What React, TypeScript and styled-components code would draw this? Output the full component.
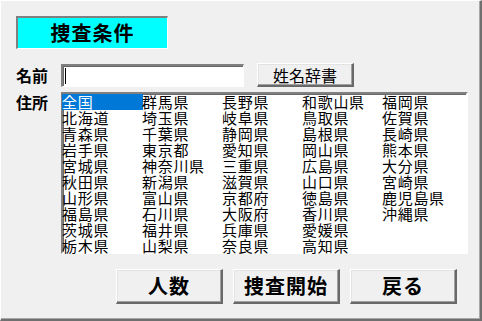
import * as React from 'react';
import styled, { createGlobalStyle } from 'styled-components';

const GlobalStyle = createGlobalStyle`
	html, body {
		margin: 0;
		padding: 0;
		background: #f0f0f0;
	}
	* {
		box-sizing: border-box;
	}
`;

const jpFont = `"Noto Sans CJK JP", "MS Gothic", sans-serif`;

const prefectures = [
	'全国', '北海道', '青森県', '岩手県', '宮城県', '秋田県', '山形県', '福島県', '茨城県', '栃木県',
	'群馬県', '埼玉県', '千葉県', '東京都', '神奈川県', '新潟県', '富山県', '石川県', '福井県', '山梨県',
	'長野県', '岐阜県', '静岡県', '愛知県', '三重県', '滋賀県', '京都府', '大阪府', '兵庫県', '奈良県',
	'和歌山県', '鳥取県', '島根県', '岡山県', '広島県', '山口県', '徳島県', '香川県', '愛媛県', '高知県',
	'福岡県', '佐賀県', '長崎県', '熊本県', '大分県', '宮崎県', '鹿児島県', '沖縄県',
];

const Window = styled.div`
	width: 482px;
	height: 321px;
	background: #f0f0f0;
	border-style: solid;
	border-width: 1px 2px 2px 1px;
	border-color: #fff #6f6f6f #6f6f6f #fff;
	box-shadow: inset -1px -1px 0 #a8a8a8;
	padding: 15px 0 0 15px;
	font-family: ${jpFont};
	color: #000;
	display: flex;
	flex-direction: column;
`;

const TitleBox = styled.div`
	width: 152px;
	height: 33px;
	background: #00ffff;
	border-style: solid;
	border-width: 2px 1px 1px 2px;
	border-color: #808080 #fff #fff #808080;
	display: flex;
	align-items: center;
	justify-content: center;
	font-size: 20px;
	font-weight: bold;
	line-height: 1;
	letter-spacing: 1px;
	padding-bottom: 1px;
`;

const FormRow = styled.div<{ $align: 'center' | 'flex-start'; $top: number }>`
	display: flex;
	align-items: ${(p) => p.$align};
	margin-top: ${(p) => p.$top}px;
`;

const Label = styled.div<{ $pad?: number }>`
	width: 45px;
	font-size: 16px;
	font-weight: bold;
	line-height: 16px;
	padding-top: ${(p) => p.$pad ?? 0}px;
`;

const TextBox = styled.div`
	width: 183px;
	height: 23px;
	background: #fff;
	border-style: solid;
	border-width: 2px 1px 1px 2px;
	border-color: #808080 #fff #fff #808080;
	box-shadow: inset 1px 1px 0 #696969;
	display: flex;
	align-items: center;
	padding-left: 2px;
`;

const Caret = styled.span`
	display: block;
	width: 1px;
	height: 16px;
	background: #000;
`;

const Button = styled.button<{ $w: number; $h: number; $big?: boolean }>`
	width: ${(p) => p.$w}px;
	height: ${(p) => p.$h}px;
	margin: 0;
	padding: 0;
	background: #f0f0f0;
	border-style: solid;
	border-width: 1px 2px 2px 1px;
	border-color: #fff #696969 #696969 #fff;
	box-shadow: inset -1px -1px 0 #a0a0a0, inset 1px 1px 0 #e3e3e3;
	font-family: ${jpFont};
	font-size: ${(p) => (p.$big ? 20 : 16)}px;
	font-weight: ${(p) => (p.$big ? 'bold' : 'normal')};
	letter-spacing: ${(p) => (p.$big ? 1 : 0)}px;
	line-height: 1;
	color: #000;
	display: flex;
	align-items: center;
	justify-content: center;
`;

const DictButton = styled(Button)`
	margin-left: 13px;
`;

const ListBox = styled.div`
	width: 407px;
	height: 162px;
	background: #fff;
	border-style: solid;
	border-width: 2px;
	border-color: #808080 #fff #fff #808080;
	box-shadow: inset 1px 1px 0 #696969;
	display: grid;
	grid-template-rows: repeat(10, 16px);
	grid-auto-columns: 80px;
	grid-auto-flow: column;
	align-content: start;
`;

const ListItem = styled.div<{ $selected?: boolean }>`
	font-size: 15px;
	letter-spacing: 0.7px;
	line-height: 16px;
	height: 16px;
	white-space: nowrap;
	margin-left: -1px;
	background: ${(p) => (p.$selected ? '#0078d7' : 'transparent')};
	color: ${(p) => (p.$selected ? '#fff' : '#000')};
`;

const ButtonBar = styled.div`
	display: flex;
	gap: 10px;
	margin: 15px 0 0 100px;
`;

export default function App() {
	return (
		<>
			<GlobalStyle />
			<Window>
				<TitleBox>捜査条件</TitleBox>
				<FormRow $align="center" $top={14}>
					<Label>名前</Label>
					<TextBox>
						<Caret />
					</TextBox>
					<DictButton $w={97} $h={24}>
						姓名辞書
					</DictButton>
				</FormRow>
				<FormRow $align="flex-start" $top={5}>
					<Label $pad={2}>住所</Label>
					<ListBox>
						{prefectures.map((name, i) => (
							<ListItem key={name} $selected={i === 0}>
								{name}
							</ListItem>
						))}
					</ListBox>
				</FormRow>
				<ButtonBar>
					<Button $w={107} $h={35} $big>
						人数
					</Button>
					<Button $w={107} $h={35} $big>
						捜査開始
					</Button>
					<Button $w={107} $h={35} $big>
						戻る
					</Button>
				</ButtonBar>
			</Window>
		</>
	);
}
